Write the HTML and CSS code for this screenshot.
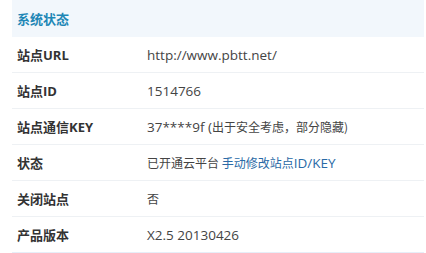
FILE: index.html
```html
<!DOCTYPE html>
<html lang="zh">
<head>
<meta charset="utf-8">
<title>系统状态</title>
<link rel="stylesheet" href="styles.css">
</head>
<body>
<div class="panel">
  <div class="panel-head">系统状态</div>
  <div class="row"><div class="label">站点URL</div><div class="value"><span class="en">http://www.pbtt.net/</span></div></div>
  <div class="row"><div class="label">站点ID</div><div class="value"><span class="en">1514766</span></div></div>
  <div class="row"><div class="label">站点通信KEY</div><div class="value"><span class="en">37****9f (</span>出于安全考虑，部分隐藏)</div></div>
  <div class="row"><div class="label">状态</div><div class="value">已开通云平台 <a class="link" href="#">手动修改站点<span class="en">ID/KEY</span></a></div></div>
  <div class="row"><div class="label">关闭站点</div><div class="value">否</div></div>
  <div class="row last"><div class="label">产品版本</div><div class="value"><span class="en">X2.5 20130426</span></div></div>
</div>
</body>
</html>
```
FILE: styles.css
```css
html, body {
  margin: 0;
  padding: 0;
  background: #ffffff;
}
body {
  font-family: "Open Sans", "Noto Sans CJK SC", sans-serif;
  font-size: 13px;
  color: #444;
}
.panel {
  margin-left: 12px;
  width: 412px;
}
.panel-head {
  height: 37px;
  display: flex;
  align-items: center;
  padding-left: 5px;
  background: #f2f7fc;
  color: #1f87b6;
  font-weight: bold;
  font-size: 13px;
  font-family: "Noto Sans CJK SC", sans-serif;
}
.row {
  display: flex;
  align-items: center;
  height: 35px;
  border-bottom: 1px solid #eef1f4;
}
.row.last {
  border-bottom-color: #e6eef8;
}
.label {
  width: 130px;
  padding-left: 5px;
  font-weight: bold;
  font-size: 13px;
  color: #333;
  font-family: "Open Sans", "Noto Sans CJK SC", sans-serif;
}
.value {
  flex: 1;
  color: #444;
  font-size: 12px;
  font-family: "Noto Sans CJK SC", sans-serif;
}
.en {
  font-family: "Open Sans", sans-serif;
  font-size: 13.5px;
}
.link {
  color: #2a6aa6;
  text-decoration: none;
}
```
